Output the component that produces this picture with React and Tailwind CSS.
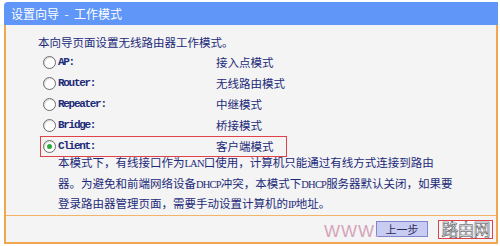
const modes = [
  { key: "AP", name: "接入点模式" },
  { key: "Router", name: "无线路由模式" },
  { key: "Repeater", name: "中继模式" },
  { key: "Bridge", name: "桥接模式" },
  { key: "Client", name: "客户端模式" },
];

const cn = { fontFamily: '"Noto Sans CJK SC", "Liberation Sans", sans-serif' };
const mono = { fontFamily: '"Liberation Mono", "Noto Sans CJK SC", monospace' };

function Radio({ checked }) {
  return (
    <span className="flex h-[13px] w-[13px] items-center justify-center rounded-full border border-[#6b6b6b] bg-white shadow-[inset_1px_1px_1px_rgba(0,0,0,0.15)]">
      {checked && <span className="h-[5px] w-[5px] rounded-full bg-[#2fa83a]" />}
    </span>
  );
}

// latin bits in the help text are narrow in the original
function N({ children }) {
  return (
    <span className="text-[10.5px] tracking-[-0.8px]" style={{ fontFamily: '"Liberation Serif", serif' }}>
      {children}
    </span>
  );
}

export default function App() {
  return (
    <div className="h-[246px] w-[500px] overflow-hidden bg-white pl-[4px] pr-[2px] pt-[2px]" style={cn}>
      <div className="flex h-[23px] items-center rounded-tl-[4px] bg-[#5f96f7] pl-[7px] text-[12px] text-white">
        设置向导 &nbsp;-&nbsp; 工作模式
      </div>
      <div className="border-x-2 border-b-2 border-[#f3a650] bg-[#f4f4f4]">
        <div className="h-[190px] pl-[32px] pt-[8px] text-[11.5px] text-[#1c2a78]">
          <div className="h-[19px] leading-[19px]">本向导页面设置无线路由器工作模式。</div>
          <div className="ml-[2px]">
            {modes.map((m) => {
              const sel = m.key === "Client";
              return (
                <div
                  key={m.key}
                  className={
                    "flex h-[21px] w-[247px] items-center pl-[3px] " +
                    (sel ? "outline outline-1 -outline-offset-1 outline-[#e0424a]" : "")
                  }
                >
                  <Radio checked={sel} />
                  <span className="ml-[2px] w-[158px] text-[11px] font-bold tracking-[-1.3px] text-[#1c2a78]" style={mono}>
                    {m.key}:
                  </span>
                  <span>{m.name}</span>
                </div>
              );
            })}
          </div>
          <div className="-mt-[4px] whitespace-nowrap pl-[20px] leading-[19.5px]">
            <div>本模式下，有线接口作为<N>LAN</N>口使用，计算机只能通过有线方式连接到路由</div>
            <div>器。为避免和前端网络设备<N>DHCP</N>冲突，本模式下<N>DHCP</N>服务器默认关闭，如果要</div>
            <div>登录路由器管理页面，需要手动设置计算机的<N>IP</N>地址。</div>
          </div>
        </div>
        <div className="border-t border-[#f3b46a]" />
        <div className="relative flex h-[26px] items-center justify-end gap-[10px] pr-[3px]">
          <span className="absolute left-[318px] top-[3px] z-10 text-[17px] tracking-[1px] text-[#d4a3b9]" style={{ fontFamily: '"Liberation Sans", sans-serif' }}>
            WWW.
          </span>
          <button className="relative flex h-[16px] w-[52px] items-center justify-center border border-[#7f86cf] bg-[#c9ccf1] text-[11px] text-[#2a2a5a]">
            上一步
          </button>
          <button className="relative flex h-[19px] w-[55px] items-center justify-center border border-[#e0424a] bg-[#f6f6fb] text-[11px] text-[#2a2a5a]">
            <span className="absolute inset-0 flex items-center justify-center text-[17px] tracking-[-1px] text-transparent [-webkit-text-stroke:0.5px_#444]">
              路由网
            </span>
          </button>
        </div>
      </div>
    </div>
  );
}
